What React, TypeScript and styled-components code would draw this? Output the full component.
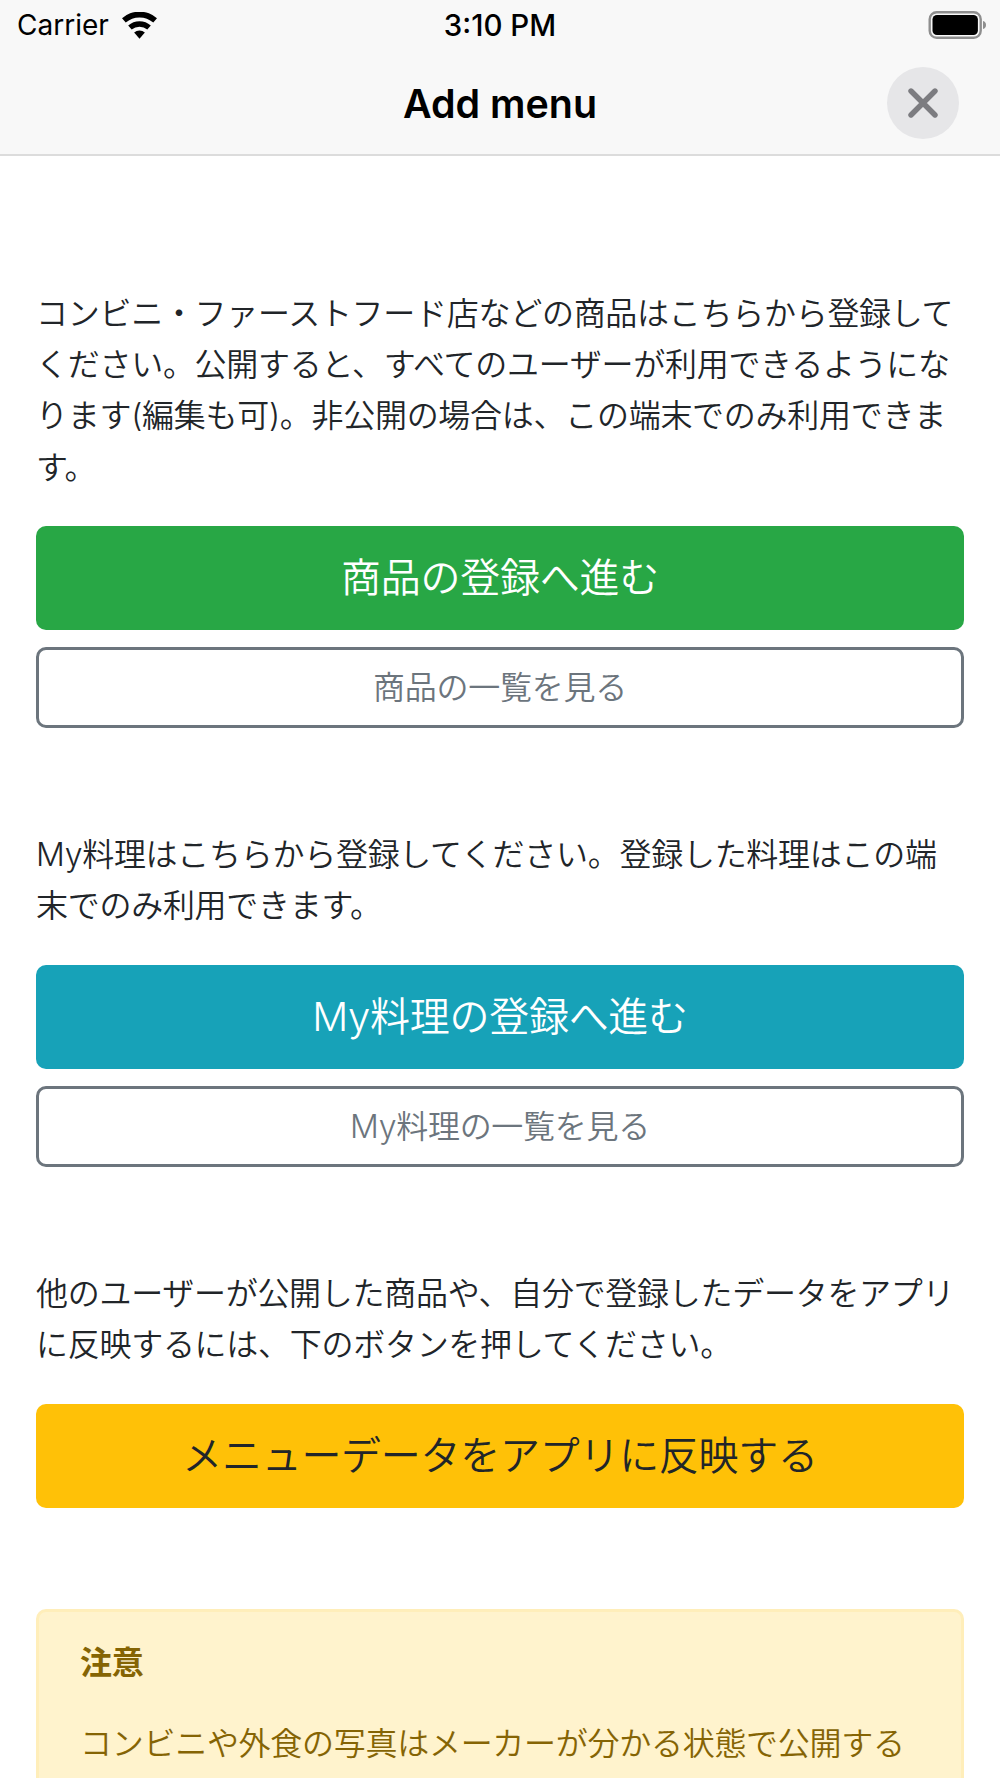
import React from 'react';
import styled, { createGlobalStyle } from 'styled-components';

const Global = createGlobalStyle`
  html, body { margin: 0; padding: 0; background: #fff; }
  body { width: 1000px; height: 1778px; overflow: hidden; font-family: Inter, "Noto Sans CJK JP", sans-serif; }
`;
const Page = styled.div`
  width: 1000px;
  height: 1778px;
  overflow: hidden;
  display: flex;
  flex-direction: column;
`;
const Top = styled.header`
  height: 156px;
  flex: none;
  box-sizing: border-box;
  background: #f8f8f8;
  border-bottom: 2px solid #dcdcdc;
  display: flex;
  flex-direction: column;
`;
const StatusBar = styled.div`
  height: 53px;
  flex: none;
  box-sizing: border-box;
  padding: 0 14px 3px;
  display: grid;
  grid-template-columns: 1fr auto 1fr;
  align-items: center;
  color: #000;
`;
const Carrier = styled.div`
  display: flex;
  align-items: center;
  gap: 12px;
  margin-left: 3px;
  font-family: Inter, sans-serif;
  font-size: 28px;
`;
const Clock = styled.div`
  font-family: Inter, sans-serif;
  font-size: 29.5px;
  font-weight: 500;
`;
const Battery = styled.div`
  justify-self: end;
  display: flex;
  margin-right: -1px;
`;
const NavBar = styled.div`
  flex: 1;
  display: flex;
  align-items: center;
  justify-content: center;
  position: relative;
`;
const Title = styled.h1`
  margin: 0;
  font-family: Inter, sans-serif;
  font-size: 39.4px;
  font-weight: 600;
  color: #000;
`;
const Close = styled.button`
  position: absolute;
  right: 41px;
  top: 14px;
  width: 72px;
  height: 72px;
  border: 0;
  padding: 0;
  border-radius: 50%;
  background: #e6e6e8;
  display: flex;
  align-items: center;
  justify-content: center;
`;
const Content = styled.main`
  padding: 132px 36px 0;
  display: flex;
  flex-direction: column;
  font-weight: 350;
  letter-spacing: -0.28px;
`;
const Section = styled.section`
  display: flex;
  flex-direction: column;
  margin-bottom: 101px;
`;
const Para = styled.p`
  margin: 0 0 33.2px;
  font-size: 32px;
  line-height: 51.2px;
  color: #212529;
  font-family: Inter, "Noto Sans CJK JP", sans-serif;
`;
const Primary = styled.button<{ $bg: string; $fg: string }>`
  height: 104.4px;
  border: 0;
  border-radius: 10px;
  background: ${p => p.$bg};
  color: ${p => p.$fg};
  font-family: Inter, "Noto Sans CJK JP", sans-serif;
  font-size: 40px;
  font-weight: 350;
  letter-spacing: -0.28px;
  padding: 0 0 6px;
`;
const Outline = styled.button`
  margin-top: 16.8px;
  height: 81px;
  border: 3px solid #6c757d;
  border-radius: 10px;
  background: #fff;
  color: #6c757d;
  font-family: Inter, "Noto Sans CJK JP", sans-serif;
  font-size: 32px;
  font-weight: 350;
  letter-spacing: -0.28px;
  padding: 0 0 5px;
`;
const Alert = styled.aside`
  background: #fff3cd;
  border: 3px solid #ffeeba;
  border-radius: 10px;
  padding: 25px 41px;
  color: #856404;
  height: 300px;
  box-sizing: border-box;
`;
const AlertTitle = styled.div`
  font-size: 32px;
  font-weight: 700;
  line-height: 51px;
  margin-bottom: 30px;
`;
const AlertText = styled.div`
  font-size: 32px;
  line-height: 51.2px;
`;

export default function App() {
  return (
    <Page>
      <Global />
      <Top>
        <StatusBar>
          <Carrier>
            Carrier
            <svg width="37" height="27" viewBox="0 0 36 26" fill="#000">
              <path d="M18 26 L12.8 19.8 A8 8 0 0 1 23.2 19.8 Z" />
              <path d="M10.4 17 L7 13 A16.5 16.5 0 0 1 29 13 L25.6 17 A11.5 11.5 0 0 0 10.4 17 Z" />
              <path d="M4.6 10.2 L1 6 A25.5 25.5 0 0 1 35 6 L31.4 10.2 A20.5 20.5 0 0 0 4.6 10.2 Z" />
            </svg>
          </Carrier>
          <Clock>3:10 PM</Clock>
          <Battery>
            <svg width="59" height="28" viewBox="0 0 58 28">
              <rect x="1.2" y="1.2" width="51" height="25.6" rx="7" fill="none" stroke="#8e8e8e" strokeWidth="2.4" />
              <rect x="4" y="4" width="45.4" height="20" rx="4.5" fill="#000" />
              <path d="M54.5 10 C56.5 10.6 57.5 12 57.5 14 C57.5 16 56.5 17.4 54.5 18 Z" fill="#8e8e8e" />
            </svg>
          </Battery>
        </StatusBar>
        <NavBar>
          <Title>Add menu</Title>
          <Close aria-label="close">
            <svg width="30" height="30" viewBox="0 0 30 30" stroke="#7c7c80" strokeWidth="5.4" strokeLinecap="round">
              <path d="M3 3 L27 27 M27 3 L3 27" />
            </svg>
          </Close>
        </NavBar>
      </Top>
      <Content>
        <Section>
          <Para>コンビニ・ファーストフード店などの商品はこちらから登録してください。公開すると、すべてのユーザーが利用できるようになります(編集も可)。非公開の場合は、この端末でのみ利用できます。</Para>
          <Primary $bg="#28a745" $fg="#fff">商品の登録へ進む</Primary>
          <Outline>商品の一覧を見る</Outline>
        </Section>
        <Section>
          <Para>My料理はこちらから登録してください。登録した料理はこの端末でのみ利用できます。</Para>
          <Primary $bg="#17a2b8" $fg="#fff">My料理の登録へ進む</Primary>
          <Outline>My料理の一覧を見る</Outline>
        </Section>
        <Section>
          <Para>他のユーザーが公開した商品や、自分で登録したデータをアプリに反映するには、下のボタンを押してください。</Para>
          <Primary $bg="#ffc107" $fg="#212529">メニューデータをアプリに反映する</Primary>
        </Section>
        <Alert>
          <AlertTitle>注意</AlertTitle>
          <AlertText>コンビニや外食の写真はメーカーが分かる状態で公開する</AlertText>
        </Alert>
      </Content>
    </Page>
  );
}
